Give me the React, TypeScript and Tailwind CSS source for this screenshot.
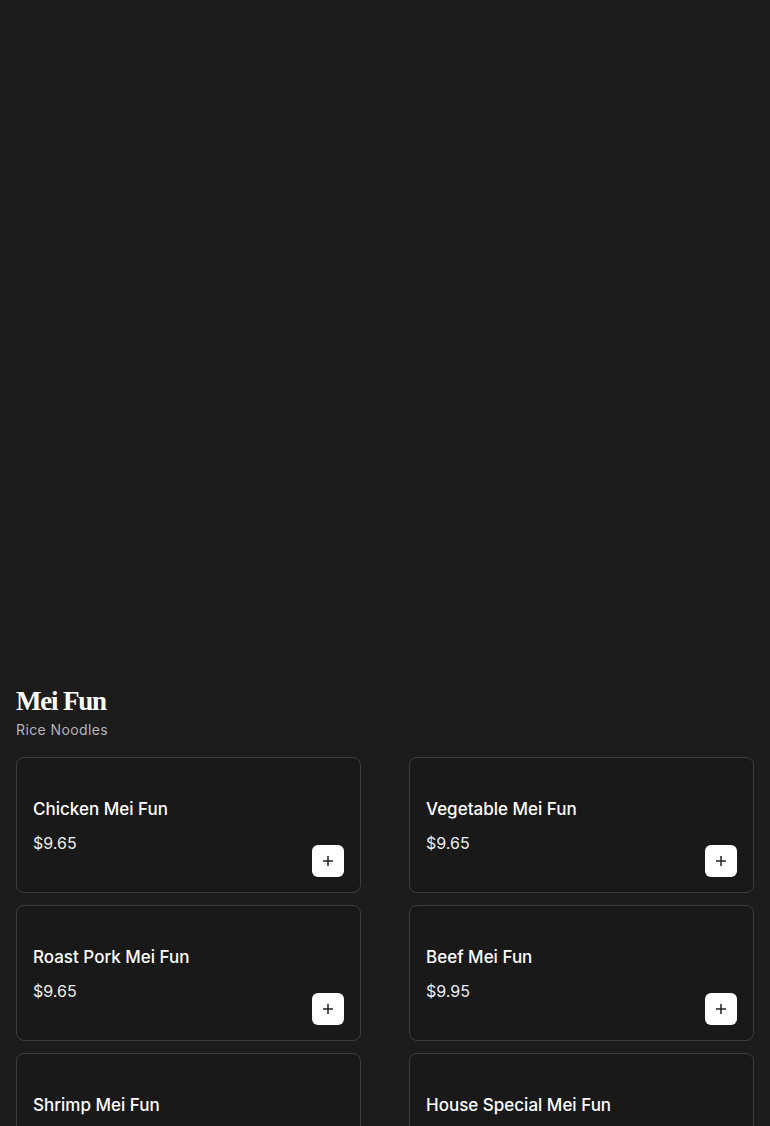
import React from "react";

const items = [
  { name: "Chicken Mei Fun", price: "$9.65" },
  { name: "Vegetable Mei Fun", price: "$9.65" },
  { name: "Roast Pork Mei Fun", price: "$9.65" },
  { name: "Beef Mei Fun", price: "$9.95" },
  { name: "Shrimp Mei Fun", price: "$9.95" },
  { name: "House Special Mei Fun", price: "$10.45" },
];

export default function App() {
  return (
    <div
      className="min-h-[1126px] bg-[#1c1c1c] text-white"
      style={{ fontFamily: "Inter, 'Open Sans', sans-serif" }}
    >
      <div className="h-[684px]" />
      <section className="px-4">
        <h2
          className="text-[27px] leading-[34px] font-bold tracking-[-1.2px] text-white"
          style={{ fontFamily: "'Liberation Serif', 'DejaVu Serif', serif" }}
        >
          Mei Fun
        </h2>
        <p className="mt-[2px] text-[14px] leading-[20px] text-[#b5b5b5] tracking-[0.4px]">Rice Noodles</p>
        <div className="mt-[17px] grid grid-cols-2 gap-x-12 gap-y-3">
          {items.map((it) => (
            <div
              key={it.name}
              className="flex h-[136px] rounded-lg border border-[#3d3d3d] bg-[#191919] p-4"
            >
              <div className="flex flex-1 flex-col justify-center pt-[1px]">
                <div className="text-[17px] leading-[24px] font-medium text-white">{it.name}</div>
                <div className="mt-[10px] text-[16px] leading-[24px] text-[#eeeeee]">{it.price}</div>
              </div>
              <button className="mb-[-1px] flex h-8 w-8 items-center justify-center self-end rounded-md bg-white">
                <svg width="12" height="12" viewBox="0 0 12 12" fill="none">
                  <path d="M6 1v10M1 6h10" stroke="#222" strokeWidth="1.5" />
                </svg>
              </button>
            </div>
          ))}
        </div>
      </section>
    </div>
  );
}
